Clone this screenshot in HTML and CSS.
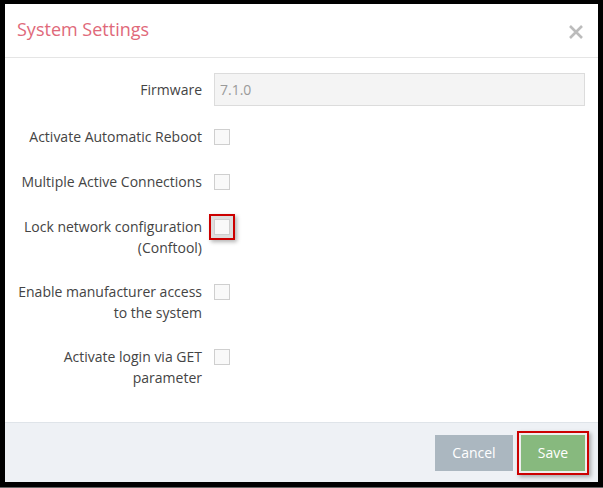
FILE: index.html
```html
<!DOCTYPE html>
<html>
<head>
<meta charset="utf-8">
<link rel="stylesheet" href="styles.css">
</head>
<body>
<div class="modal">
  <div class="modal-header">
    <h1 class="modal-title">System Settings</h1>
    <button class="close" aria-label="Close">
      <svg width="16" height="16" viewBox="0 0 16 16"><path d="M2 2 L14 14 M14 2 L2 14" stroke="#bcbcbc" stroke-width="2.6" stroke-linecap="butt"/></svg>
    </button>
  </div>
  <div class="modal-body">
    <div class="row row-input">
      <label class="label">Firmware</label>
      <div class="control"><input class="text-input" type="text" value="7.1.0" disabled></div>
    </div>
    <div class="row">
      <label class="label">Activate Automatic Reboot</label>
      <div class="control"><span class="checkbox"></span></div>
    </div>
    <div class="row">
      <label class="label">Multiple Active Connections</label>
      <div class="control"><span class="checkbox"></span></div>
    </div>
    <div class="row two-line">
      <label class="label">Lock network configuration<br>(Conftool)</label>
      <div class="control"><span class="checkbox highlighted"></span></div>
    </div>
    <div class="row two-line">
      <label class="label">Enable manufacturer access<br>to the system</label>
      <div class="control"><span class="checkbox"></span></div>
    </div>
    <div class="row two-line">
      <label class="label">Activate login via GET<br>parameter</label>
      <div class="control"><span class="checkbox"></span></div>
    </div>
  </div>
  <div class="modal-footer">
    <button class="btn btn-cancel">Cancel</button>
    <button class="btn btn-save">Save</button>
  </div>
</div>
</body>
</html>
```
FILE: styles.css
```css
* { box-sizing: border-box; }
html, body { margin: 0; padding: 0; }
body {
  background: #000;
  height: 488px;
  padding: 4px 5px 0 5px;
  border-bottom: 1px solid #666;
  font-family: "Open Sans", "Liberation Sans", sans-serif;
}
.modal {
  background: #fff;
  width: 593px;
  height: 478px;
  display: flex;
  flex-direction: column;
}
.modal-header {
  height: 54px;
  border-bottom: 1px solid #e5e5e5;
  display: flex;
  align-items: center;
  justify-content: space-between;
  padding: 0 14px 3px 12px;
}
.modal-title {
  margin: 0;
  font-size: 18px;
  font-weight: 400;
  color: #e0697a;
  letter-spacing: 0;
}
.close {
  border: 0;
  background: none;
  padding: 0;
  width: 16px;
  height: 16px;
  display: flex;
  margin-top: 5px;
}
.modal-body {
  flex: 1;
  padding: 15px 13px 0 0;
}
.row {
  display: flex;
  align-items: flex-start;
  margin-bottom: 24px;
}
.row.two-line { margin-bottom: 23px; }
.row-input {
  align-items: center;
  margin-bottom: 20px;
}
.row-input .label { margin-top: -1px; }
.label {
  width: 209px;
  padding-right: 12px;
  text-align: right;
  white-space: nowrap;
  font-size: 14px;
  line-height: 21px;
  color: #444;
}
.control { flex: 1; }
.text-input {
  width: 100%;
  height: 33px;
  border: 1px solid #dcdcdc;
  background: #f4f4f4;
  padding: 0 5px;
  font-family: inherit;
  font-size: 14px;
  color: #9a9a9a;
  -webkit-text-fill-color: #9a9a9a;
  opacity: 1;
}
.checkbox {
  display: block;
  width: 16px;
  height: 16px;
  margin-top: 3px;
  border: 1px solid #cfcfcf;
  background: #f9f9f9;
}
.checkbox.highlighted {
  box-shadow: 0 0 0 3px #dedede, 0 0 0 5px #cc0000, 2px 2px 4px 5px rgba(0,0,0,0.3);
}
.modal-footer {
  height: 60px;
  background: #eef1f5;
  border-top: 1px solid #dfe4e9;
  display: flex;
  align-items: center;
  justify-content: flex-end;
  gap: 8px;
  padding: 0 13px 0 0;
}
.btn {
  border: 0;
  height: 36px;
  font-family: inherit;
  font-size: 14px;
  color: #fff;
  padding: 0;
}
.btn-cancel {
  width: 78px;
  background: #abb7c0;
}
.btn-save {
  width: 64px;
  background: #87b97e;
  box-shadow: 0 0 0 2px #eeeeee, 0 0 0 4px #cc0000, 2px 2px 4px 4px rgba(0,0,0,0.3);
}
```
